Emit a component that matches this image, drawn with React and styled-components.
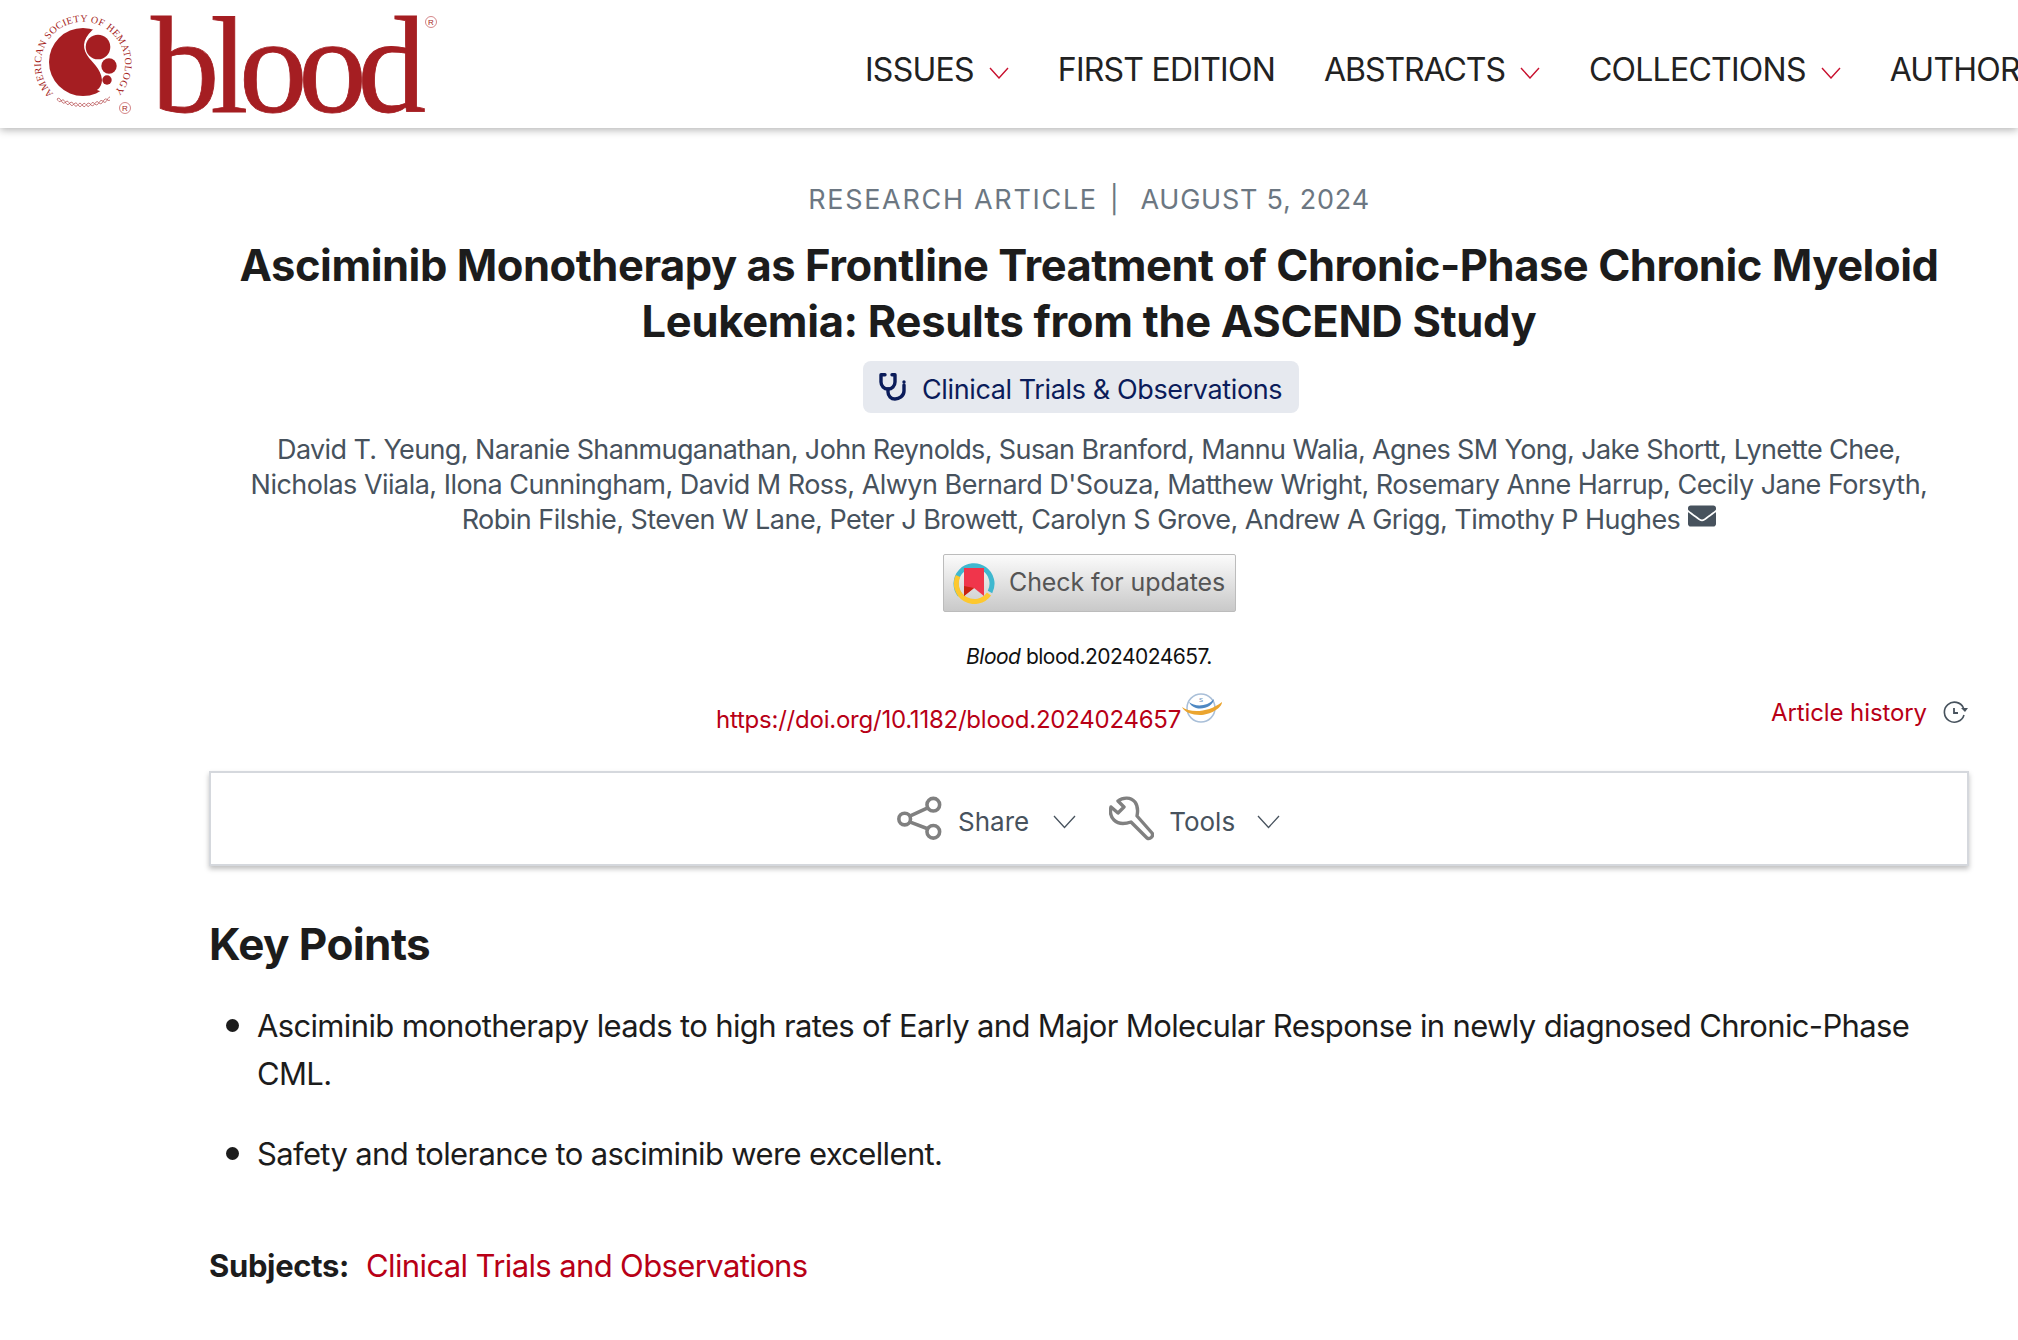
import React from "react";
import styled, { createGlobalStyle } from "styled-components";
import { FaEnvelope } from "react-icons/fa";

const Global = createGlobalStyle`
  html, body { margin: 0; padding: 0; background: #fff; overflow: hidden; }
  body { width: 2018px; height: 1340px; font-family: Inter, "Liberation Sans", sans-serif; }
`;

const Header = styled.header`
  height: 128px;
  display: flex;
  align-items: flex-start;
  background: #fff;
  box-shadow: 0 2px 8px rgba(0, 0, 0, 0.3);
  position: relative;
  overflow: hidden;
`;
const LogoSvg = styled.svg`
  width: 450px;
  height: 128px;
  flex: none;
`;
const Nav = styled.nav`
  margin-left: 415px;
  height: 128px;
  padding-top: 11px;
  box-sizing: border-box;
  display: flex;
  align-items: center;
  gap: 49px;
  white-space: nowrap;
`;
const NavItem = styled.span`
  display: inline-flex;
  align-items: center;
  gap: 15px;
  font-size: 32px;
  letter-spacing: ${(p) => p.$tracking ?? -0.75}px;
  color: #222;
  svg { color: #c8102e; margin-top: 6px; }
`;

const Main = styled.main`
  padding: 52px 49px 0 209px;
  display: flex;
  flex-direction: column;
`;
const Meta = styled.div`
  display: flex;
  justify-content: center;
  font-size: 27px;
  line-height: 40px;
  letter-spacing: 1.7px;
  color: #6c7782;
`;
const MetaSep = styled.span`
  margin: 0 20px 0 12px;
`;
const MetaDate = styled.span`
  letter-spacing: 0.75px;
`;
const Title = styled.h1`
  margin: 17px 0 0;
  text-align: center;
  font-size: 43.5px;
  line-height: 56px;
  font-weight: 700;
  letter-spacing: -0.47px;
  color: #1c1c1c;
`;
const TitleEnd = styled.span`
  letter-spacing: -0.3px;
`;
const PillRow = styled.div`
  display: flex;
  padding-left: 654px;
  margin-top: 12px;
`;
const Pill = styled.div`
  width: 436px;
  height: 52px;
  box-sizing: border-box;
  padding-left: 16px;
  display: flex;
  align-items: center;
  gap: 15px;
  background: #e6e9ef;
  border-radius: 8px;
  font-size: 27px;
  letter-spacing: -0.38px;
  color: #0b1c5a;
`;
const PillLabel = styled.span`
  position: relative;
  top: 2px;
`;
const Authors = styled.div`
  margin-top: 19px;
  text-align: center;
  font-size: 27px;
  line-height: 35px;
  color: #47525d;
  letter-spacing: -0.52px;
  svg { margin-left: 8px; vertical-align: -1px; }
`;
const AuthorsFirst = styled.span`
  letter-spacing: -0.62px;
`;
const UpdatesRow = styled.div`
  display: flex;
  padding-left: 734px;
  margin-top: 17px;
`;
const Updates = styled.div`
  width: 293px;
  height: 58px;
  box-sizing: border-box;
  display: flex;
  align-items: center;
  gap: 14px;
  padding-left: 9px;
  border: 1px solid #bcbcbc;
  border-radius: 2px;
  background: linear-gradient(#fbfbfb, #c9c9c9);
  font-size: 25px;
  letter-spacing: -0.1px;
  white-space: nowrap;
  color: #555;
`;
const UpdatesLabel = styled.span`
  position: relative;
  top: -1px;
`;
const CiteLine = styled.div`
  margin-top: 30px;
  text-align: center;
  font-size: 21px;
  line-height: 30px;
  color: #111;
  letter-spacing: -0.5px;
  em { font-style: italic; }
`;
const DoiRow = styled.div`
  margin-top: 21px;
  height: 50px;
  display: flex;
  justify-content: space-between;
  padding-left: 507px;
`;
const Doi = styled.div`
  display: flex;
  align-items: flex-start;
`;
const RedLink = styled.a`
  color: #b80016;
  text-decoration: none;
`;
const DoiLink = styled(RedLink)`
  font-size: 24px;
  line-height: 36px;
  margin-top: 9px;
  letter-spacing: -0.23px;
`;
const History = styled.div`
  display: flex;
  align-items: center;
  gap: 16px;
  height: 36px;
  margin-top: 1px;
  font-size: 24px;
  letter-spacing: -0.1px;
`;
const Toolbar = styled.div`
  margin-top: 28px;
  height: 95px;
  box-sizing: border-box;
  border: 2px solid #d5d8dd;
  box-shadow: 0 3px 5px rgba(0, 0, 0, 0.25);
  display: flex;
  align-items: center;
  padding-left: 686px;
  background: #fff;
`;
const ToolItem = styled.div`
  display: inline-flex;
  align-items: center;
  font-size: 26px;
  color: #47525d;
  margin-right: 33px;
`;
const ToolIcon = styled.span`
  display: flex;
  color: #808080;
  margin-right: ${(p) => p.$gap}px;
`;
const ToolLabel = styled.span`
  position: relative;
  top: 3px;
`;
const Caret = styled.span`
  display: flex;
  color: #47525d;
  margin-left: ${(p) => p.$gap}px;
  position: relative;
  top: 3px;
`;
const KeyHeading = styled.h2`
  margin: 48px 0 0;
  font-size: 44px;
  line-height: 60px;
  font-weight: 700;
  letter-spacing: -0.6px;
  color: #1c1c1c;
`;
const Points = styled.ul`
  margin: 28px 0 0;
  padding: 0 0 0 48px;
  list-style: none;
  font-size: 31px;
  line-height: 48px;
  letter-spacing: -0.65px;
  color: #1c1c1c;
`;
const Point = styled.li`
  position: relative;
  & + & { margin-top: 32px; }
  &::before {
    content: "";
    position: absolute;
    left: -31px;
    top: 17px;
    width: 13px;
    height: 13px;
    border-radius: 50%;
    background: #1c1c1c;
  }
`;
const Subjects = styled.div`
  margin-top: 64px;
  font-size: 31px;
  line-height: 47px;
  letter-spacing: -0.62px;
  color: #1c1c1c;
  b { font-weight: 700; margin-right: 9px; letter-spacing: -0.35px; }
`;

const Chain = () => {
  const top = [];
  const bottom = [];
  for (let x = 57; x <= 110; x += 1) {
    const base = 105 - 6.5 * Math.pow((x - 83) / 27, 2);
    const w = 1.7 * Math.sin((x - 57) * 0.75);
    top.push([x, base + w]);
    bottom.push([x, base - w]);
  }
  const d = (p) => "M" + p.map(([x, y]) => `${x} ${y.toFixed(1)}`).join("L");
  return (
    <g fill="none" stroke="#b5494c" strokeWidth="0.7">
      <path d={d(top)} />
      <path d={d(bottom)} />
    </g>
  );
};

const Logo = () => (
  <LogoSvg viewBox="0 0 450 128">
    <defs>
      <path id="ring" d="M53.6 93.8 A42 42 0 1 1 106 99" />
    </defs>
    <circle cx="83" cy="62" r="34" fill="#a51e22" />
    <path d="M96 27 C84 36 81 46 87 55 C92 63 101 68 102 80 C102 84 100 88 97 90 L125 100 L125 20 Z" fill="#fff" />
    <circle cx="98" cy="47" r="12.3" fill="#a51e22" />
    <circle cx="109" cy="66" r="7.7" fill="#a51e22" />
    <circle cx="107" cy="80" r="4.7" fill="#a51e22" />
    <text fontFamily="'Liberation Serif', serif" fontSize="10" fill="#a51e22" letterSpacing="0.36">
      <textPath href="#ring">AMERICAN SOCIETY OF HEMATOLOGY</textPath>
    </text>
    <Chain />
    <circle cx="125" cy="108" r="5.5" fill="none" stroke="#c9686b" strokeWidth="0.8" />
    <text x="125" y="111" textAnchor="middle" fontFamily="'Liberation Sans', sans-serif" fontSize="8" fill="#a51e22">R</text>
    <text
      x="151"
      y="112"
      fontFamily="'Liberation Serif', serif"
      fontSize="137"
      fill="#a51e22"
      stroke="#a51e22"
      strokeWidth="0.8"
      textLength="275"
      lengthAdjust="spacing"
    >
      blood
    </text>
    <circle cx="431" cy="22" r="5.5" fill="none" stroke="#c9686b" strokeWidth="0.8" />
    <text x="431" y="25" textAnchor="middle" fontFamily="'Liberation Sans', sans-serif" fontSize="8" fill="#a51e22">R</text>
  </LogoSvg>
);

const NavCaret = () => (
  <svg width="20" height="12" viewBox="0 0 20 12" fill="none" stroke="currentColor" strokeWidth="1.4">
    <path d="M1 1l9 10 9-10" />
  </svg>
);

const Stethoscope = () => (
  <svg width="28" height="28" viewBox="0 0 28 28" fill="none" stroke="#0b1c5a" strokeWidth="3.4" strokeLinecap="round" strokeLinejoin="round">
    <path d="M6 1.8H2V9c0 4 3 7 7 7s7-3 7-7V1.8h-3" />
    <path d="M9 16v3c0 4 3 7 7 7s9-3 9-8v-6" />
    <circle cx="25" cy="9" r="1.7" fill="#0b1c5a" stroke="none" />
  </svg>
);

const UpdatesIcon = () => (
  <svg width="42" height="42" viewBox="0 0 42 42">
    <path d="M7 33A18 18 0 1 1 37 30" fill="none" stroke="#3fb8cf" strokeWidth="5" />
    <path d="M5 14A18 18 0 0 0 36 32" fill="none" stroke="#fdc82f" strokeWidth="5" />
    <path d="M11 6h20v28l-10-8-10 8z" fill="#f0354b" />
    <path d="M11 24l10 2-10 8z" fill="#c8230f" />
  </svg>
);

const CrossmarkIcon = () => (
  <svg width="42" height="32" viewBox="0 0 42 32">
    <circle cx="20" cy="15" r="14" fill="#fff" stroke="#a9bfd8" strokeWidth="1.5" />
    <path d="M8 9c6 5 18 5 25-3-1 7-10 11-18 9-3-1-6-3-7-6z" fill="#2f73b8" opacity="0.85" />
    <path d="M1 14c8 6 26 6 40-5 0 6-12 13-22 13C11 22 3 19 1 14z" fill="#eba52f" />
    <text x="20" y="9" textAnchor="middle" fontSize="6" fill="#5b86b5" fontFamily="'Liberation Sans', sans-serif">S</text>
  </svg>
);

const HistoryIcon = () => (
  <svg width="26" height="24" viewBox="0 0 26 24" fill="none" stroke="#47525d" strokeWidth="1.6">
    <path d="M20.5 8A10 10 0 1 0 21 15" />
    <path d="M22 12l-4-4h7z" fill="#47525d" stroke="none" />
    <path d="M11 8v5h4" strokeWidth="1.8" />
  </svg>
);

const ShareIcon = () => (
  <svg width="45" height="45" viewBox="0 0 44 44" fill="none" stroke="currentColor" strokeWidth="3.5">
    <circle cx="7.5" cy="22.5" r="5.7" />
    <circle cx="35.5" cy="8.5" r="6.2" />
    <circle cx="35.5" cy="35" r="6.2" />
    <path d="M13 19.5L30 11.5M13 25.5L30 32" />
  </svg>
);

const WrenchIcon = () => (
  <svg width="45" height="45" viewBox="0 0 45 45" fill="none" stroke="currentColor" strokeWidth="3.4" strokeLinejoin="round">
    <path d="M9 5C14 1 22 1 26 6C29 10 29 15 28 20L43 37C45 40 41 44 38 42L22 26C16 28 9 28 5 24C1 20 1 15 2 11L9 17L15 11Z" />
  </svg>
);

const ToolCaret = () => (
  <svg width="23" height="14" viewBox="0 0 23 14" fill="none" stroke="currentColor" strokeWidth="1.3">
    <path d="M1 1l10.5 11.5L22 1" />
  </svg>
);

export default function App() {
  return (
    <>
      <Global />
      <Header>
        <Logo />
        <Nav>
          <NavItem>ISSUES <NavCaret /></NavItem>
          <NavItem>FIRST EDITION</NavItem>
          <NavItem $tracking={-1.05}>ABSTRACTS <NavCaret /></NavItem>
          <NavItem>COLLECTIONS <NavCaret /></NavItem>
          <NavItem>AUTHORS <NavCaret /></NavItem>
        </Nav>
      </Header>
      <Main>
        <Meta>
          RESEARCH ARTICLE<MetaSep>|</MetaSep><MetaDate>AUGUST 5, 2024</MetaDate>
        </Meta>
        <Title>
          Asciminib Monotherapy as Frontline Treatment of Chronic-Phase Chronic Myeloid
          <br />
          <TitleEnd>Leukemia: Results from the ASCEND Study</TitleEnd>
        </Title>
        <PillRow>
          <Pill><Stethoscope /><PillLabel>Clinical Trials &amp; Observations</PillLabel></Pill>
        </PillRow>
        <Authors>
          <AuthorsFirst>David T. Yeung, Naranie Shanmuganathan, John Reynolds, Susan Branford, Mannu Walia, Agnes SM Yong, Jake Shortt, Lynette Chee,</AuthorsFirst>
          <br />
          Nicholas Viiala, Ilona Cunningham, David M Ross, Alwyn Bernard D'Souza, Matthew Wright, Rosemary Anne Harrup, Cecily Jane Forsyth,
          <br />
          Robin Filshie, Steven W Lane, Peter J Browett, Carolyn S Grove, Andrew A Grigg, Timothy P Hughes
          <FaEnvelope size={28} color="#47525d" />
        </Authors>
        <UpdatesRow>
          <Updates><UpdatesIcon /><UpdatesLabel>Check for updates</UpdatesLabel></Updates>
        </UpdatesRow>
        <CiteLine><em>Blood</em> blood.2024024657.</CiteLine>
        <DoiRow>
          <Doi>
            <DoiLink>https://doi.org/10.1182/blood.2024024657</DoiLink>
            <CrossmarkIcon />
          </Doi>
          <History><RedLink>Article history</RedLink><HistoryIcon /></History>
        </DoiRow>
        <Toolbar>
          <ToolItem>
            <ToolIcon $gap={16}><ShareIcon /></ToolIcon>
            <ToolLabel>Share</ToolLabel>
            <Caret $gap={24}><ToolCaret /></Caret>
          </ToolItem>
          <ToolItem>
            <ToolIcon $gap={15}><WrenchIcon /></ToolIcon>
            <ToolLabel>Tools</ToolLabel>
            <Caret $gap={22}><ToolCaret /></Caret>
          </ToolItem>
        </Toolbar>
        <KeyHeading>Key Points</KeyHeading>
        <Points>
          <Point>Asciminib monotherapy leads to high rates of Early and Major Molecular Response in newly diagnosed Chronic-Phase CML.</Point>
          <Point>Safety and tolerance to asciminib were excellent.</Point>
        </Points>
        <Subjects><b>Subjects:</b> <RedLink>Clinical Trials and Observations</RedLink></Subjects>
      </Main>
    </>
  );
}
